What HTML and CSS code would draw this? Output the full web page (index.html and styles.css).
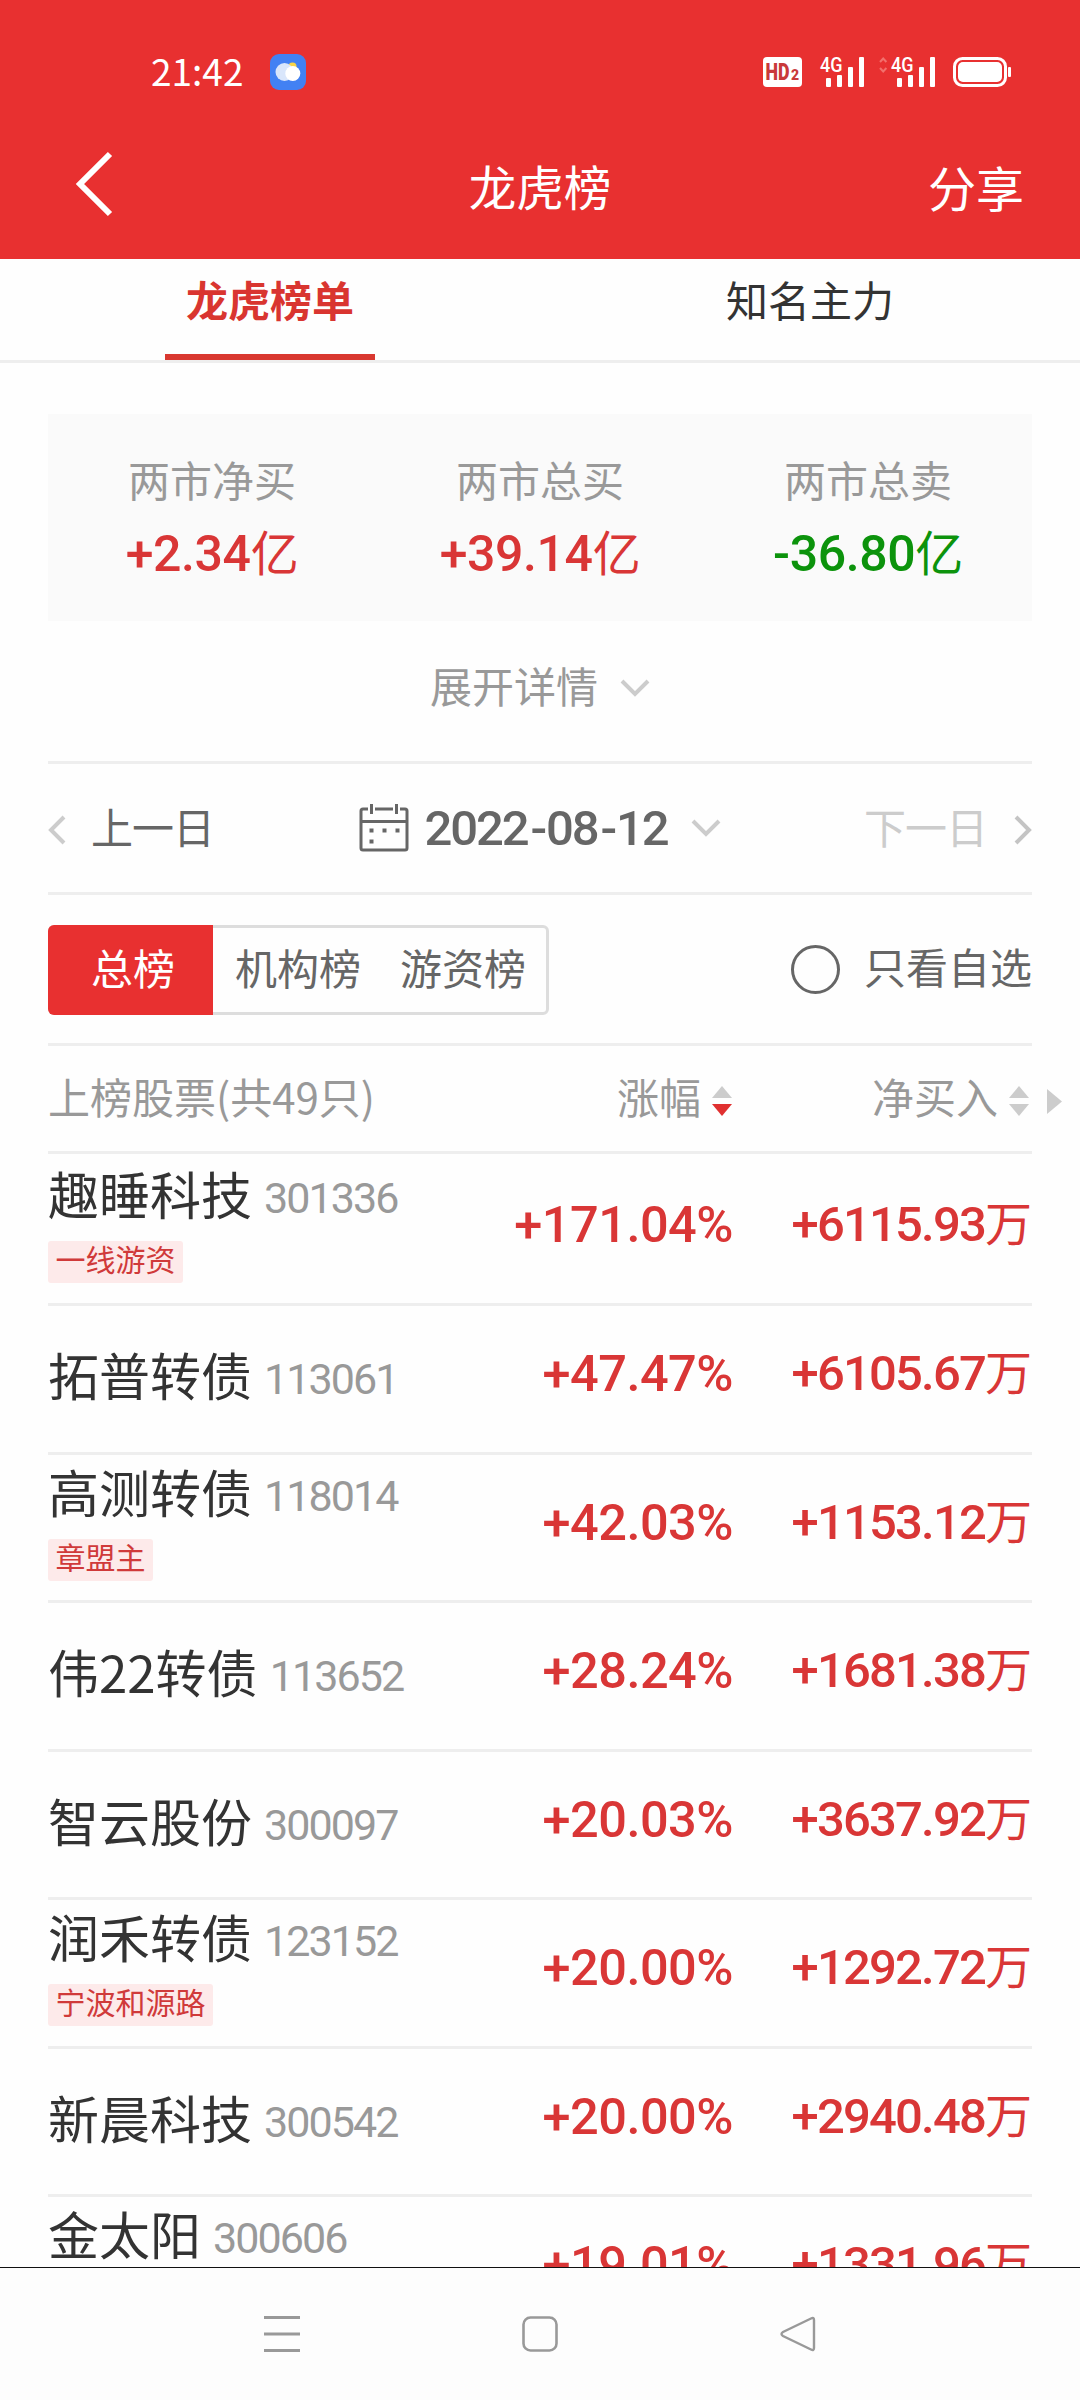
FILE: index.html
```html
<!DOCTYPE html>
<html lang="zh-CN">
<head>
<meta charset="utf-8">
<title>龙虎榜</title>
<link rel="stylesheet" href="styles.css">
</head>
<body>
<div class="screen">
  <header class="top">
    <div class="status">
      <div class="status-left">
        <span class="clock">21:42</span>
        <svg class="weather" width="36" height="36" viewBox="0 0 36 36"><rect width="36" height="36" rx="9" fill="#4281f3"/><circle cx="22.500" cy="12.500" r="4" fill="#f8d448"/><circle cx="14.500" cy="18" r="9" fill="#d9e6fb"/><circle cx="22.800" cy="19.500" r="7.500" fill="#fff"/></svg>
      </div>
      <svg class="status-icons" width="250" height="40" viewBox="762 52 250 40">
        <rect x="763" y="57" width="39" height="30" rx="4" fill="#fff"/>
        <text class="hd" x="765.500" y="80" textLength="24" lengthAdjust="spacingAndGlyphs">HD</text>
        <text class="hd-sub" x="791" y="80">2</text>
        <g fill="#fff">
          <text class="net" x="820" y="72" textLength="22.500" lengthAdjust="spacingAndGlyphs">4G</text>
          <rect x="826" y="78" width="5" height="9" rx="1"/><rect x="837" y="75" width="5" height="12" rx="1"/><rect x="848" y="67" width="5" height="20" rx="1"/><rect x="859" y="57" width="5" height="30" rx="1"/>
          <text class="net" x="891" y="72" textLength="22.500" lengthAdjust="spacingAndGlyphs">4G</text>
          <rect x="897" y="78" width="5" height="9" rx="1"/><rect x="908" y="75" width="5" height="12" rx="1"/><rect x="919" y="67" width="5" height="20" rx="1"/><rect x="930" y="57" width="5" height="30" rx="1"/>
          <rect x="958" y="62" width="44" height="20" rx="5"/><rect x="1008" y="67" width="3" height="10" rx="1"/>
        </g>
        <path d="M880 62l3.200-3.500 3.200 3.500M880 68l3.200 3.500 3.200-3.500" fill="none" stroke="#f2706c" stroke-width="2"/>
        <rect x="954.500" y="58.500" width="51" height="27" rx="8" fill="none" stroke="#fff" stroke-width="3"/>
      </svg>
    </div>
    <div class="titlebar">
      <svg class="back" width="38" height="66" viewBox="0 0 38 66"><path d="M35 3L5 33l30 30" fill="none" stroke="#fff" stroke-width="6"/></svg>
      <h1 class="title">龙虎榜</h1>
      <span class="share">分享</span>
    </div>
  </header>

  <nav class="tabs">
    <div class="tab tab-active"><span>龙虎榜单</span><i class="tab-bar"></i></div>
    <div class="tab"><span>知名主力</span></div>
  </nav>

  <main class="content">
    <section class="summary">
      <div class="stat"><div class="label">两市净买</div><div class="amount up">+2.34<b>亿</b></div></div>
      <div class="stat"><div class="label">两市总买</div><div class="amount up">+39.14<b>亿</b></div></div>
      <div class="stat"><div class="label">两市总卖</div><div class="amount down">-36.80<b>亿</b></div></div>
    </section>

    <div class="expand"><span>展开详情</span><svg class="chev" width="30" height="18" viewBox="0 0 30 18"><path d="M2 2l13 13L28 2" fill="none" stroke="#ccc" stroke-width="4"/></svg></div>

    <div class="dates">
      <div class="day prev"><svg width="18" height="30" viewBox="0 0 18 30"><path d="M16 2L3 15l13 13" fill="none" stroke="#ccc" stroke-width="4"/></svg><span>上一日</span></div>
      <div class="current">
        <svg width="50" height="48" viewBox="0 0 50 48" fill="none" stroke="#666" stroke-width="3"><path d="M9 5H4q-2 0-2 2v37q0 2 2 2h42q2 0 2-2V7q0-2-2-2h-5M16 5h18M2 17.500h46M12.500 0v10M37.500 0v10"/><path d="M10.500 26.500h4M23.500 26.500h4M36.500 26.500h4M10.500 37.500h4" stroke-width="4"/></svg>
        <span class="date">2022<i>-</i>08<i>-</i>12</span>
        <svg class="chev" width="30" height="18" viewBox="0 0 30 18"><path d="M2 2l13 13L28 2" fill="none" stroke="#ccc" stroke-width="4"/></svg>
      </div>
      <div class="day next"><span>下一日</span><svg width="18" height="30" viewBox="0 0 18 30"><path d="M2 2l13 13L2 28" fill="none" stroke="#c4c4c4" stroke-width="4"/></svg></div>
    </div>

    <div class="filters">
      <div class="segments"><span class="seg seg-active">总榜</span><span class="seg">机构榜</span><span class="seg">游资榜</span></div>
      <div class="only"><i class="radio"></i><span>只看自选</span></div>
    </div>

    <div class="thead">
      <span>上榜股票(共49只)</span>
      <span class="sort">涨幅<svg width="20" height="30" viewBox="0 0 20 30"><path d="M0 12L10 0l10 12z" fill="#ccc"/><path d="M0 18h20L10 30z" fill="#e03030"/></svg></span>
      <span class="sort">净买入<svg width="20" height="30" viewBox="0 0 20 30"><path d="M0 12L10 0l10 12z" fill="#ccc"/><path d="M0 18h20L10 30z" fill="#ccc"/></svg></span>
      <svg class="more" width="15" height="25" viewBox="0 0 15 25"><path d="M0 0l15 12.500L0 25z" fill="#ccc"/></svg>
    </div>

    <div class="rows">
      <div class="row first"><div class="stock"><div class="line"><span class="name">趣睡科技</span><span class="code">301336</span></div><span class="tag">一线游资</span></div><div class="pct">+171.04%</div><div class="net-buy">+6115.93<b>万</b></div></div>
      <div class="row"><div class="stock plain"><div class="line"><span class="name">拓普转债</span><span class="code">113061</span></div></div><div class="pct">+47.47%</div><div class="net-buy">+6105.67<b>万</b></div></div>
      <div class="row"><div class="stock"><div class="line"><span class="name">高测转债</span><span class="code">118014</span></div><span class="tag">章盟主</span></div><div class="pct">+42.03%</div><div class="net-buy">+1153.12<b>万</b></div></div>
      <div class="row"><div class="stock plain"><div class="line"><span class="name">伟22转债</span><span class="code">113652</span></div></div><div class="pct">+28.24%</div><div class="net-buy">+1681.38<b>万</b></div></div>
      <div class="row"><div class="stock plain"><div class="line"><span class="name">智云股份</span><span class="code">300097</span></div></div><div class="pct">+20.03%</div><div class="net-buy">+3637.92<b>万</b></div></div>
      <div class="row"><div class="stock"><div class="line"><span class="name">润禾转债</span><span class="code">123152</span></div><span class="tag">宁波和源路</span></div><div class="pct">+20.00%</div><div class="net-buy">+1292.72<b>万</b></div></div>
      <div class="row"><div class="stock plain"><div class="line"><span class="name">新晨科技</span><span class="code">300542</span></div></div><div class="pct">+20.00%</div><div class="net-buy">+2940.48<b>万</b></div></div>
      <div class="row"><div class="stock"><div class="line"><span class="name">金太阳</span><span class="code">300606</span></div></div><div class="pct">+19.01%</div><div class="net-buy">+1331.96<b>万</b></div></div>
    </div>
  </main>

  <footer class="navbar">
    <svg width="36" height="36" viewBox="0 0 36 36"><path d="M0 1.500h36M0 18h36M0 34.500h36" stroke="#999" stroke-width="3"/></svg>
    <svg width="36" height="36" viewBox="0 0 36 36"><rect x="1.500" y="1.500" width="33" height="33" rx="7" fill="none" stroke="#999" stroke-width="2.600"/></svg>
    <svg width="36" height="36" viewBox="0 0 36 36"><path d="M34 4v28q0 3-3 1.500L3 20q-3-2 0-4L31 2.500Q34 1 34 4z" fill="none" stroke="#999" stroke-width="2.400"/></svg>
  </footer>
</div>
</body>
</html>
```
FILE: styles.css
```css
* { box-sizing: border-box; }
body {
  margin: 0;
  background: #fefefe;
  font-family: "Noto Sans CJK SC", sans-serif;
  font-size: 42px;
  color: #333;
}
svg { display: block; flex: none; }
i { font-style: normal; }
b { font-weight: 400; }
.screen { width: 1080px; height: 2400px; display: flex; flex-direction: column; overflow: hidden; }

/* header */
.top { height: 259px; flex: none; background: #e83030; color: #fff; }
.status { height: 144px; padding: 0 68px 0 151px; display: flex; align-items: center; justify-content: space-between; }
.status-left { display: flex; align-items: center; gap: 27px; }
.clock { font-size: 37px; line-height: 40px; margin-top: -5px; }
.status-icons { overflow: visible; }
.hd { font: 900 23px Roboto, sans-serif; fill: #c9393a; }
.hd-sub { font: 900 14px Roboto, sans-serif; fill: #c9393a; }
.net { font: 500 20px Roboto, sans-serif; }
.titlebar { height: 83px; padding: 0 56px; display: grid; grid-template-columns: 1fr auto 1fr; align-items: center; }
.back { margin: -3px 0 0 19px; }
.title { margin: 0; font-size: 47.5px; font-weight: 400; line-height: 82px; }
.share { font-size: 48px; line-height: 82px; text-align: right; }

/* tabs */
.tabs { height: 104px; flex: none; display: flex; border-bottom: 3px solid #eee; line-height: 79px; }
.tab { flex: 1; display: flex; flex-direction: column; align-items: center; justify-content: space-between; }
.tab-active { color: #d93530; font-weight: 700; }
.tab-bar { width: 210px; height: 6px; background: #d93830; }

.content { flex: 1; min-height: 0; overflow: hidden; padding: 51px 48px 0; }

/* market totals */
.summary { height: 207px; padding-top: 35px; display: grid; grid-template-columns: repeat(3, 1fr); background: #fafafa; text-align: center; }
.label { line-height: 60px; color: #999; }
.amount { margin-top: 5px; line-height: 80px; font-family: Roboto, "Noto Sans CJK SC", sans-serif; font-size: 50px; font-weight: 500; letter-spacing: -.4px; white-space: nowrap; }
.amount b { font-size: 48px; line-height: 1; }
.up { color: #d93636; }
.down { color: #0c930c; }

.expand { height: 143px; padding-bottom: 13px; border-bottom: 3px solid #eee; display: flex; align-items: center; justify-content: center; gap: 22px; color: #999; }
.expand .chev { margin-top: 6px; }

/* date switcher */
.dates { height: 131px; border-bottom: 3px solid #eee; display: grid; grid-template-columns: 1fr auto 1fr; align-items: center; color: #666; }
.day { display: flex; align-items: center; gap: 25px; line-height: 60px; }
.day span { margin-top: -5px; letter-spacing: -1px; }
.next { justify-content: flex-end; color: #ccc; gap: 27px; }
.day svg { margin-top: 4px; }
.current { display: flex; align-items: center; }
.date { margin: 1px 23px 0 15px; font-family: Roboto, sans-serif; font-size: 49px; font-weight: 500; letter-spacing: -2.1px; line-height: 60px; }
.date i { padding: 0 1px 0 3px; }

/* filters */
.filters { height: 151px; padding-top: 2px; border-bottom: 3px solid #eee; display: flex; align-items: center; justify-content: space-between; color: #666; }
.segments { width: 501px; height: 90px; display: flex; border: 3px solid #ddd; border-radius: 6px; }
.seg { width: 165px; line-height: 78px; text-align: center; padding-left: 5px; }
.seg-active { flex: none; height: 90px; margin: -3px 0 -3px -3px; line-height: 84px; background: #e83030; color: #fff; border-radius: 6px 0 0 6px; }
.only { display: flex; align-items: center; gap: 24px; line-height: 60px; }
.only span { margin-top: -9px; }
.radio { width: 49px; height: 49px; border: 3px solid #666; border-radius: 50%; margin-top: -2px; }

/* table */
.thead, .row { display: grid; grid-template-columns: 390px 297px 297px; border-bottom: 3px solid #eee; }
.thead { position: relative; height: 108px; line-height: 100px; color: #999; }
.sort { display: flex; justify-content: flex-end; align-items: center; gap: 11px; height: 100px; padding-right: 3px; }
.sort svg { margin-top: 9px; }
.more { position: absolute; right: -30px; top: 43px; }
.row { height: 148.5px; }
.first { height: 152px; padding-top: 3px; }
.stock { padding-top: 6px; }
.plain { padding-top: 38px; }
.line { height: 60px; line-height: 60px; display: flex; align-items: baseline; white-space: nowrap; }
.name { font-size: 51px; }
.code { margin: -2px 0 2px 12px; position: relative; top: -2px; font-family: Roboto, sans-serif; font-size: 43px; font-stretch: 88%; letter-spacing: -1.9px; color: #999; }
.tag { display: block; width: max-content; margin-top: 18px; height: 42px; padding: 0 7.500px; border-radius: 3px; background: #fdeaea; color: #d03a3a; font-size: 30px; line-height: 34px; }
.pct, .net-buy { color: #d93636; text-align: right; font-family: Roboto, "Noto Sans CJK SC", sans-serif; font-weight: 500; line-height: 135px; height: 135px; white-space: nowrap; }
.pct { font-size: 50.5px; letter-spacing: -.5px; padding-right: 2px; }
.net-buy { font-size: 49px; letter-spacing: -1.8px; }
.net-buy b { font-size: 47px; line-height: 1; letter-spacing: 0; }

/* system navigation */
.navbar { height: 133px; flex: none; border-top: 1px solid #111; background: #fdfdfd; display: flex; justify-content: space-between; align-items: center; padding: 0 264px; }
```
